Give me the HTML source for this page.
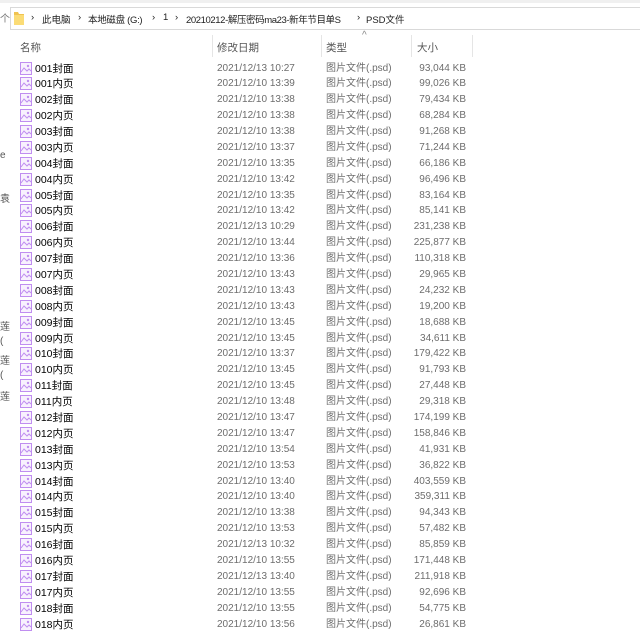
<!DOCTYPE html>
<html><head><meta charset="utf-8"><style>
body{margin:0;width:640px;height:643px;background:#fff;position:relative;overflow:hidden;font-family:"Liberation Sans","Noto Sans CJK SC",sans-serif;font-size:10px;color:#1a1a1a}
.a{position:absolute;white-space:nowrap}
.addr{left:10px;top:7px;width:640px;height:23px;border:1px solid #d9d9d9;box-sizing:border-box}
.hdr{top:40px;font-size:10.5px;color:#555}
.sep{top:35px;width:1px;height:22px;background:#e5e5e5}
.bc{top:12px;font-size:9.5px;color:#222}
.row{position:absolute;left:0;height:16px;width:640px;line-height:16px}
.row span{position:absolute;white-space:nowrap}
.n{left:35px;color:#000;font-size:10.5px}
.d{left:217px;color:#6d6d6d}
.t{left:326px;color:#6d6d6d}
.s{right:174px;color:#6d6d6d}
.ic{position:absolute;left:20px;top:1px;width:12px;height:13px}
</style></head><body>
<div class="a" style="left:0;top:0;width:640px;height:3px;background:#f0f0f0"></div>
<div class="a addr"></div>
<div class="a" style="left:0;top:10px;color:#777;font-size:10px">个</div>
<svg class="a" style="left:13px;top:10px" width="12" height="16"><path d="M1 2h4l1 2h5v11H1z" fill="#f0c350"/><path d="M1 5h10v10H1z" fill="#fbdc76"/></svg>
<div class="a bc" style="left:31px">›</div>
<div class="a bc" style="left:42px">此电脑</div>
<div class="a bc" style="left:78px">›</div>
<div class="a bc" style="left:88px;letter-spacing:-0.3px">本地磁盘 (G:)</div>
<div class="a bc" style="left:152px">›</div>
<div class="a bc" style="left:163px">1</div>
<div class="a bc" style="left:175px">›</div>
<div class="a bc" style="left:186px;letter-spacing:-0.4px">20210212-解压密码ma23-新年节目单S</div>
<div class="a bc" style="left:357px">›</div>
<div class="a bc" style="left:366px">PSD文件</div>
<div class="a hdr" style="left:20px">名称</div>
<div class="a hdr" style="left:217px">修改日期</div>
<div class="a hdr" style="left:326px">类型</div>
<div class="a hdr" style="left:417px">大小</div>
<div class="a" style="left:362px;top:30px;color:#888;font-size:10px">^</div>
<div class="a sep" style="left:212px"></div>
<div class="a sep" style="left:321px"></div>
<div class="a sep" style="left:411px"></div>
<div class="a sep" style="left:472px"></div>
<div class="a" style="left:0;top:150px;color:#555;font-size:10px">e</div>
<div class="a" style="left:0;top:190px;color:#555;font-size:10px">袁</div>
<div class="a" style="left:0;top:318px;color:#555;font-size:10px">莲</div>
<div class="a" style="left:0;top:336px;color:#555;font-size:10px">(</div>
<div class="a" style="left:0;top:352px;color:#555;font-size:10px">莲</div>
<div class="a" style="left:0;top:370px;color:#555;font-size:10px">(</div>
<div class="a" style="left:0;top:388px;color:#555;font-size:10px">莲</div>
<div id="rows"></div>
<script>
var d=[["001封面","2021/12/13 10:27","93,044"],["001内页","2021/12/10 13:39","99,026"],["002封面","2021/12/10 13:38","79,434"],["002内页","2021/12/10 13:38","68,284"],["003封面","2021/12/10 13:38","91,268"],["003内页","2021/12/10 13:37","71,244"],["004封面","2021/12/10 13:35","66,186"],["004内页","2021/12/10 13:42","96,496"],["005封面","2021/12/10 13:35","83,164"],["005内页","2021/12/10 13:42","85,141"],["006封面","2021/12/13 10:29","231,238"],["006内页","2021/12/10 13:44","225,877"],["007封面","2021/12/10 13:36","110,318"],["007内页","2021/12/10 13:43","29,965"],["008封面","2021/12/10 13:43","24,232"],["008内页","2021/12/10 13:43","19,200"],["009封面","2021/12/10 13:45","18,688"],["009内页","2021/12/10 13:45","34,611"],["010封面","2021/12/10 13:37","179,422"],["010内页","2021/12/10 13:45","91,793"],["011封面","2021/12/10 13:45","27,448"],["011内页","2021/12/10 13:48","29,318"],["012封面","2021/12/10 13:47","174,199"],["012内页","2021/12/10 13:47","158,846"],["013封面","2021/12/10 13:54","41,931"],["013内页","2021/12/10 13:53","36,822"],["014封面","2021/12/10 13:40","403,559"],["014内页","2021/12/10 13:40","359,311"],["015封面","2021/12/10 13:38","94,343"],["015内页","2021/12/10 13:53","57,482"],["016封面","2021/12/13 10:32","85,859"],["016内页","2021/12/10 13:55","171,448"],["017封面","2021/12/13 13:40","211,918"],["017内页","2021/12/10 13:55","92,696"],["018封面","2021/12/10 13:55","54,775"],["018内页","2021/12/10 13:56","26,861"]];
var h="";
var ic='<svg class="ic" viewBox="0 0 12 13"><rect x="0.5" y="0.5" width="11" height="12" fill="#f8f1fe" stroke="#c08ef0"/><path d="M1 10l3-4 3 3 2-2 2 2" fill="none" stroke="#c08ef0"/><circle cx="8" cy="4" r="1.2" fill="#c08ef0"/></svg>';
for(var i=0;i<d.length;i++){var y=60.5+i*15.886;h+='<div class="row" style="top:'+y+'px">'+ic+'<span class="n">'+d[i][0]+'</span><span class="d">'+d[i][1]+'</span><span class="t">图片文件(.psd)</span><span class="s">'+d[i][2]+' KB</span></div>';}
document.getElementById("rows").innerHTML=h;
</script>
</body></html>
